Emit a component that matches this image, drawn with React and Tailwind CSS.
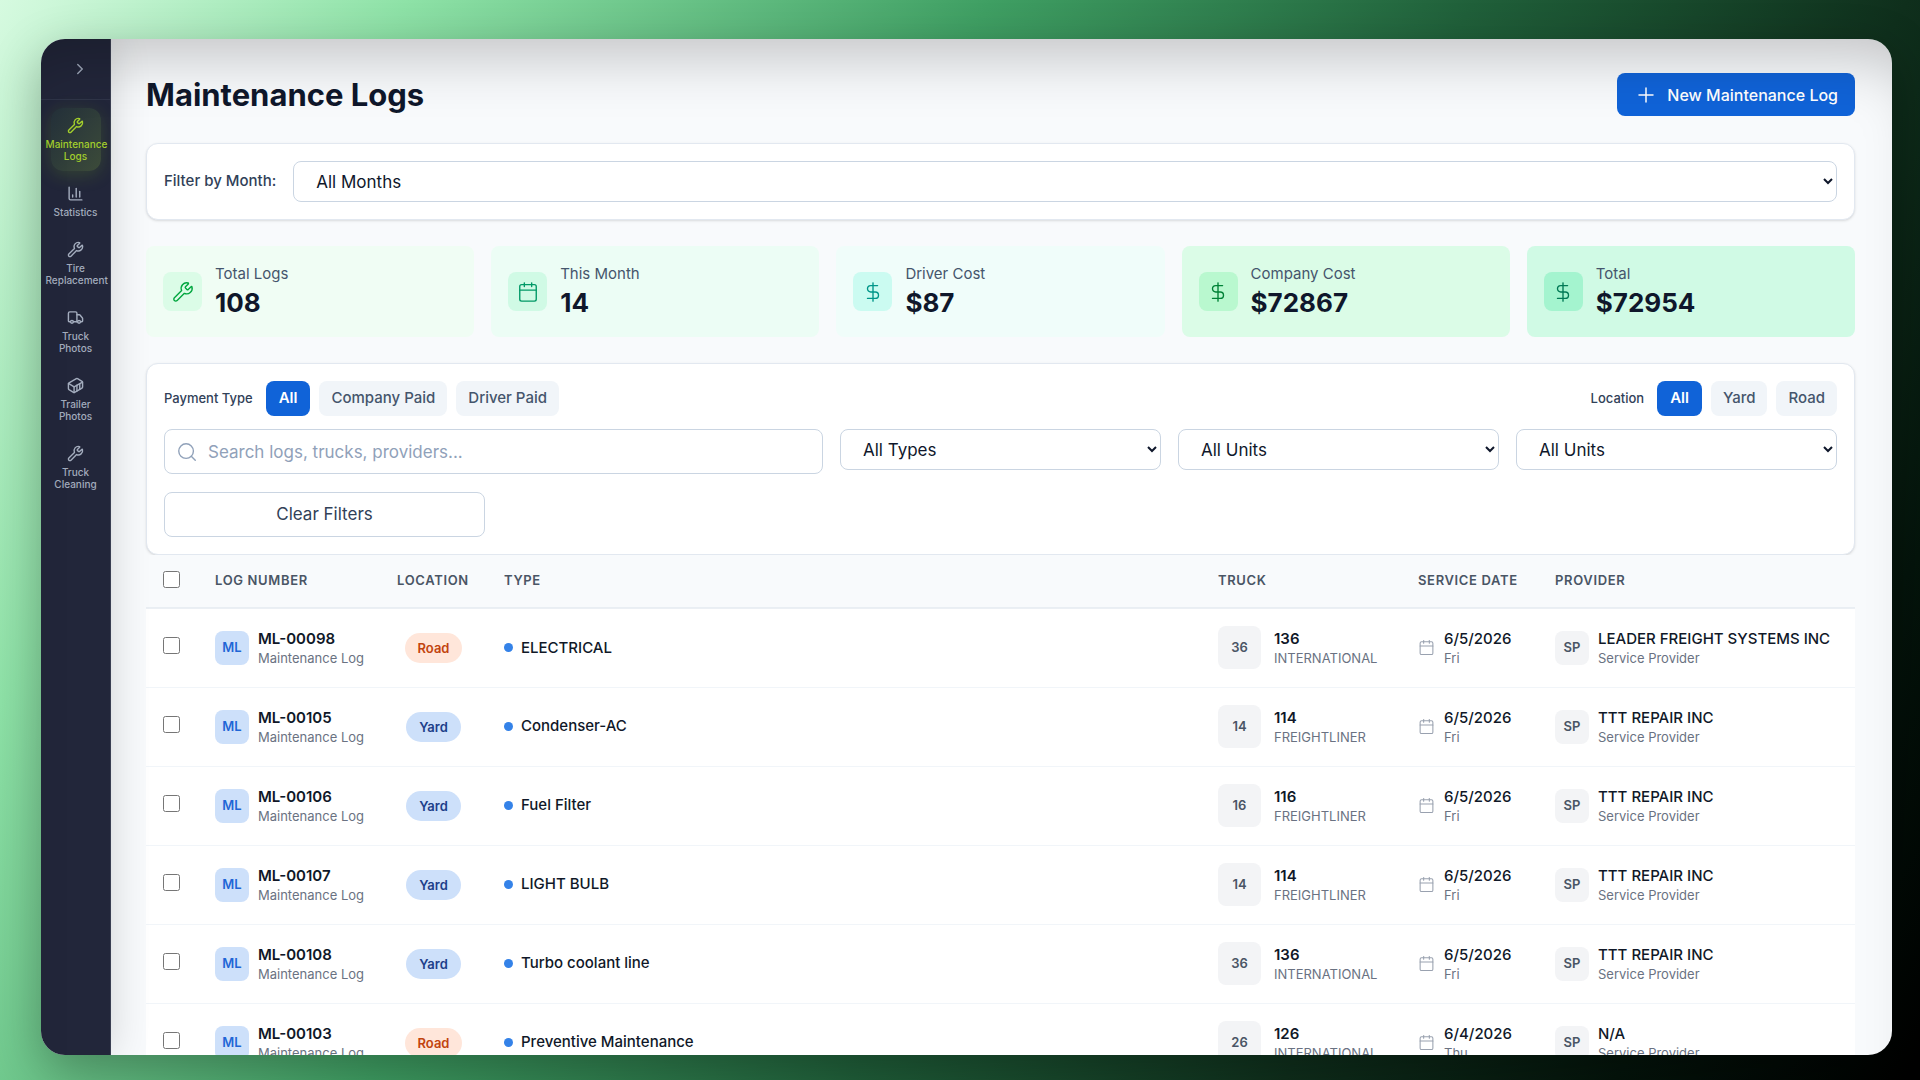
import { Wrench, ChartColumn, Truck, Container, Calendar, DollarSign, Plus, Search, ChevronRight } from "lucide-react"

const navItems = [
  { label: "Maintenance Logs", icon: Wrench, active: true },
  { label: "Statistics", icon: ChartColumn },
  { label: "Tire Replacement", icon: Wrench },
  { label: "Truck Photos", icon: Truck },
  { label: "Trailer Photos", icon: Container },
  { label: "Truck Cleaning", icon: Wrench },
]

const stats = [
  { label: "Total Logs", value: "108", icon: Wrench, card: "bg-green-50", tile: "bg-green-100 text-green-600" },
  { label: "This Month", value: "14", icon: Calendar, card: "bg-emerald-50", tile: "bg-emerald-100 text-emerald-600" },
  { label: "Driver Cost", value: "$87", icon: DollarSign, card: "bg-teal-50", tile: "bg-teal-100 text-teal-600" },
  { label: "Company Cost", value: "$72867", icon: DollarSign, card: "bg-green-100", tile: "bg-green-200 text-green-700" },
  { label: "Total", value: "$72954", icon: DollarSign, card: "bg-emerald-100", tile: "bg-emerald-200 text-emerald-700" },
]

const logs = [
  { id: "ML-00098", location: "Road", type: "ELECTRICAL", truck: "136", make: "INTERNATIONAL", date: "6/5/2026", day: "Fri", provider: "LEADER FREIGHT SYSTEMS INC" },
  { id: "ML-00105", location: "Yard", type: "Condenser-AC", truck: "114", make: "FREIGHTLINER", date: "6/5/2026", day: "Fri", provider: "TTT REPAIR INC" },
  { id: "ML-00106", location: "Yard", type: "Fuel Filter", truck: "116", make: "FREIGHTLINER", date: "6/5/2026", day: "Fri", provider: "TTT REPAIR INC" },
  { id: "ML-00107", location: "Yard", type: "LIGHT BULB", truck: "114", make: "FREIGHTLINER", date: "6/5/2026", day: "Fri", provider: "TTT REPAIR INC" },
  { id: "ML-00108", location: "Yard", type: "Turbo coolant line", truck: "136", make: "INTERNATIONAL", date: "6/5/2026", day: "Fri", provider: "TTT REPAIR INC" },
  { id: "ML-00103", location: "Road", type: "Preventive Maintenance", truck: "126", make: "INTERNATIONAL", date: "6/4/2026", day: "Thu", provider: "N/A" },
]

function Sidebar() {
  return (
    <aside className="relative w-[70px] shrink-0 bg-[#22263a] border-r border-[#3a3f52] shadow-[0_0_40px_rgba(0,0,0,0.16)]">
      <div className="h-[61px] flex items-center justify-center border-b border-[#2f3449]">
        <button aria-label="Expand sidebar" className="pl-2 pb-2 pt-2 text-[#9aa3b5]">
          <ChevronRight size={18} />
        </button>
      </div>
      <nav className="flex flex-col items-center gap-[5px] pt-2">
        {navItems.map(({ label, icon: Icon, active }) => (
          <a
            key={label}
            href="#"
            className={
              active
                ? "w-[50px] rounded-xl py-[9px] flex flex-col items-center gap-1 text-[#a3cf2c] bg-gradient-to-br from-[#24303a] to-[#3c4b39] shadow-[0_4px_18px_rgba(132,204,22,0.18)]"
                : "w-[50px] rounded-xl py-[9px] flex flex-col items-center gap-1 text-[#a3acbd]"
            }
          >
            <Icon size={17} />
            <span className="w-[68px] px-1 text-center text-[10px] leading-3 font-medium">
              {label.split(" ").map((word) => (
                <span key={word} className="block">{word}</span>
              ))}
            </span>
          </a>
        ))}
      </nav>
    </aside>
  )
}

function Pills({ label, options }) {
  return (
    <div role="group" aria-label={label} className="flex items-center gap-[9px]">
      <span className="text-[13px] font-medium text-slate-700 mr-1">{label}</span>
      {options.map((option, i) => (
        <button
          key={option}
          className={
            i === 0
              ? "h-[35px] px-[13px] rounded-lg text-[15px] font-semibold bg-[#1063d8] text-white"
              : "h-[35px] px-3 rounded-lg text-[15px] font-medium bg-slate-100 text-slate-600"
          }
        >
          {option}
        </button>
      ))}
    </div>
  )
}

function FilterSelect({ id, label, option }) {
  return (
    <select
      id={id}
      aria-label={label}
      className="w-full h-[41px] pl-[18px] rounded-lg border border-slate-300 bg-white text-[17px] text-slate-900"
    >
      <option>{option}</option>
    </select>
  )
}

function LogTable() {
  const head = "px-[17px] text-left text-[13px] font-semibold tracking-wider text-gray-600"
  return (
    <table className="w-full table-fixed whitespace-nowrap">
      <colgroup>
        <col className="w-[52px]" />
        <col className="w-[182px]" />
        <col className="w-[107px]" />
        <col />
        <col className="w-[200px]" />
        <col className="w-[137px]" />
        <col className="w-[317px]" />
      </colgroup>
      <thead className="bg-slate-50">
        <tr className="h-[53px] border-b-2 border-slate-200/70">
          <th className="pl-[17px] text-left">
            <input type="checkbox" aria-label="Select all" className="block size-[17px] mb-1" />
          </th>
          <th className={head}>LOG NUMBER</th>
          <th className={head}>LOCATION</th>
          <th className={head}>TYPE</th>
          <th className={head}>TRUCK</th>
          <th className={head}>SERVICE DATE</th>
          <th className={head}>PROVIDER</th>
        </tr>
      </thead>
      <tbody className="bg-white">
        {logs.map((log) => (
          <tr key={log.id} className="h-[79px] border-b border-slate-100">
            <td className="pl-[17px]">
              <input type="checkbox" aria-label={`Select ${log.id}`} className="block size-[17px] mb-1" />
            </td>
            <td className="px-[17px]">
              <div className="flex items-center gap-[9px]">
                <span className="size-[34px] shrink-0 rounded-lg bg-[#cde0fa] text-[#1f66d6] text-[13px] font-semibold flex items-center justify-center">ML</span>
                <div>
                  <div className="text-[15px] leading-5 font-semibold text-gray-900">{log.id}</div>
                  <div className="text-[13px] leading-[18px] text-gray-500">Maintenance Log</div>
                </div>
              </div>
            </td>
            <td className="text-center">
              <span
                className={
                  log.location === "Road"
                    ? "inline-block rounded-full px-[13px] py-[7px] text-[13px] leading-4 font-semibold bg-[#ffe6da] text-[#c2440f]"
                    : "inline-block rounded-full px-[13px] py-[7px] text-[13px] leading-4 font-semibold bg-[#cde0fa] text-[#1e3f8a]"
                }
              >
                {log.location}
              </span>
            </td>
            <td className="px-[17px]">
              <div className="flex items-center gap-2">
                <span className="size-[9px] rounded-full bg-[#3482e8]"></span>
                <span className="text-[15px] font-medium text-gray-900">{log.type}</span>
              </div>
            </td>
            <td className="px-[17px]">
              <div className="flex items-center gap-[13px]">
                <span className="size-[43px] shrink-0 rounded-lg bg-gray-100 text-gray-600 text-[13px] font-semibold flex items-center justify-center">{log.truck.slice(1)}</span>
                <div>
                  <div className="text-[15px] leading-5 font-semibold text-gray-900">{log.truck}</div>
                  <div className="text-[13px] leading-[18px] text-gray-500">{log.make}</div>
                </div>
              </div>
            </td>
            <td className="px-[17px]">
              <div className="flex items-center gap-[9px]">
                <Calendar size={17} strokeWidth={1.5} className="text-gray-400" />
                <div>
                  <div className="text-[15px] leading-5 font-medium text-gray-900">{log.date}</div>
                  <div className="text-[13px] leading-[18px] text-gray-500">{log.day}</div>
                </div>
              </div>
            </td>
            <td className="px-[17px]">
              <div className="flex items-center gap-[9px]">
                <span className="size-[34px] shrink-0 rounded-lg bg-gray-100 text-gray-600 text-[13px] font-semibold flex items-center justify-center">SP</span>
                <div>
                  <div className="text-[15px] leading-5 font-medium text-gray-900">{log.provider}</div>
                  <div className="text-[13px] leading-[18px] text-gray-500">Service Provider</div>
                </div>
              </div>
            </td>
          </tr>
        ))}
      </tbody>
    </table>
  )
}

function App() {
  return (
    <div className="h-screen pt-[39px] pr-[28px] pb-[25px] pl-[41px] font-['Inter',sans-serif] bg-[linear-gradient(120deg,#d6fae0_0%,#8ee2a7_16%,#3f9f63_39%,#20603a_58%,#0f2f1c_75%,#04140b_88%,#000000_100%)]">
      <div className="relative h-full flex rounded-3xl overflow-hidden bg-slate-50 shadow-[0_16px_50px_rgba(0,0,0,0.3)]">
        <Sidebar />

        <main className="flex-1 min-w-0 pl-[35px] pr-[37px] pt-[34px]">
          {/* Header */}
          <div className="flex items-start justify-between mb-[26px]">
            <h1 className="text-[31px] leading-[44px] font-bold text-slate-900">Maintenance Logs</h1>
            <button className="h-[43px] px-[17px] flex items-center gap-[9px] rounded-lg bg-[#1063d8] text-white text-[16px] font-medium">
              <Plus size={24} strokeWidth={1.5} />
              New Maintenance Log
            </button>
          </div>

          {/* Month filter */}
          <div className="flex items-center gap-[17px] p-[17px] mb-[26px] bg-white rounded-xl border border-slate-200 shadow-sm">
            <label htmlFor="month" className="shrink-0 text-[15px] font-medium text-slate-700">Filter by Month:</label>
            <FilterSelect id="month" option="All Months" />
          </div>

          {/* Stats */}
          <div className="grid grid-cols-5 gap-[17px] mb-[26px]">
            {stats.map(({ label, value, icon: Icon, card, tile }) => (
              <div key={label} className={`h-[91px] px-[17px] flex items-center gap-[13px] rounded-lg ${card}`}>
                <div className={`size-[39px] rounded-lg flex items-center justify-center ${tile}`}>
                  <Icon size={22} strokeWidth={1.5} />
                </div>
                <div>
                  <div className="text-[15px] leading-[22px] text-slate-600">{label}</div>
                  <div className="text-[26px] leading-[35px] font-bold text-slate-900">{value}</div>
                </div>
              </div>
            ))}
          </div>

          {/* Filters */}
          <div className="p-[17px] bg-white rounded-xl border border-slate-200 shadow-sm">
            <div className="flex items-center justify-between mb-[13px]">
              <Pills label="Payment Type" options={["All", "Company Paid", "Driver Paid"]} />
              <Pills label="Location" options={["All", "Yard", "Road"]} />
            </div>
            <div className="grid grid-cols-5 gap-x-[17px] gap-y-[18px]">
              <div className="relative col-span-2">
                <Search size={22} strokeWidth={1.5} className="absolute left-3 top-3 text-slate-400" />
                <input
                  type="text"
                  aria-label="Search logs"
                  placeholder="Search logs, trucks, providers..."
                  className="block w-full h-[45px] pl-[43px] pr-4 rounded-lg border border-slate-300 text-[17px] placeholder:text-slate-400"
                />
              </div>
              <FilterSelect label="Type" option="All Types" />
              <FilterSelect label="Truck unit" option="All Units" />
              <FilterSelect label="Trailer unit" option="All Units" />
              <button className="h-[45px] rounded-lg border border-slate-300 text-[17px] text-slate-700">Clear Filters</button>
            </div>
          </div>

          <LogTable />
        </main>

        {/* Soft shade along the top edge of the window */}
        <div className="absolute inset-0 pointer-events-none rounded-3xl shadow-[inset_0_52px_60px_-34px_rgba(0,0,0,0.22)]"></div>
      </div>
    </div>
  )
}

export default App
